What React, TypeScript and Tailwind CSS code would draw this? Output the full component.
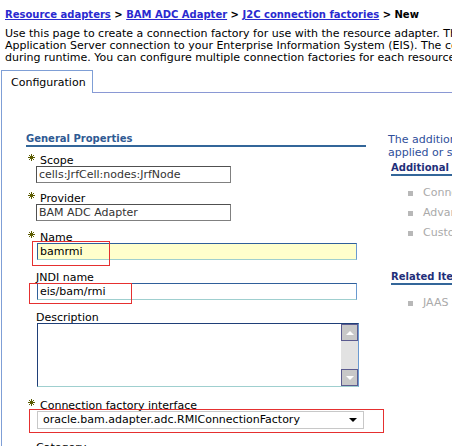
import React from "react";

const Star = () => (
  <svg width="7" height="7" viewBox="0 0 7 7" className="absolute left-[2px] top-[-1px]">
    <g stroke="#5a5a00" strokeWidth="1" strokeLinecap="round">
      <line x1="3.5" y1="0.4" x2="3.5" y2="6.6" />
      <line x1="0.4" y1="3.5" x2="6.6" y2="3.5" />
      <line x1="1.3" y1="1.3" x2="5.7" y2="5.7" />
      <line x1="5.7" y1="1.3" x2="1.3" y2="5.7" />
    </g>
  </svg>
);

const Label = ({ text, req, mt }: { text: string; req?: boolean; mt: string }) => (
  <div className={`relative h-[11px] leading-[11px] ${mt} ${req ? "pl-[14px]" : "pl-[10px]"} text-black whitespace-nowrap`}>
    {req && <Star />}
    {text}
  </div>
);

export default function App() {
  return (
    <div
      className="relative w-[452px] h-[446px] overflow-hidden bg-white text-[11px] text-black"
      style={{ fontFamily: '"DejaVu Sans", Verdana, sans-serif' }}
    >
      <div className="pl-[5px] pt-[9px] h-[21px] leading-[12px] text-[10px] font-bold whitespace-nowrap">
        <span className="text-[#2a2ad0] underline">Resource adapters</span>
        <span> &gt; </span>
        <span className="text-[#2a2ad0] underline">BAM ADC Adapter</span>
        <span> &gt; </span>
        <span className="text-[#2a2ad0] underline">J2C connection factories</span>
        <span> &gt; New</span>
      </div>
      <div className="pl-[5px] mt-[7px] leading-[12px] whitespace-nowrap">
        <div>Use this page to create a connection factory for use with the resource adapter. The connection factory provides the WebSphere</div>
        <div>Application Server connection to your Enterprise Information System (EIS). The connection factory is used</div>
        <div>during runtime. You can configure multiple connection factories for each resource adapter.</div>
      </div>
      <div className="mt-[6px] ml-[1px] flex w-[700px]">
        <div className="h-[23px] w-[92px] border-l border-t border-r border-[#7f9fd6] pl-[9px] pt-[6px] leading-[12px]">
          Configuration
        </div>
        <div className="flex-1 h-[23px] border-b border-[#8a98d4]" />
      </div>
      <div className="ml-[1px] border-l border-[#7f9fd6] pl-[24px] pt-[40px] flex w-[800px] h-[400px]">
        <div className="w-[340px] flex flex-col">
          <div className="h-[14px] leading-[12px] text-[10px] font-bold text-[#2f5a93] border-b-2 border-[#336699]">
            General Properties
          </div>
          <Label text="Scope" req mt="mt-[8px]" />
          <div className="ml-[10px] w-[195px] h-[17px] border border-[#808080] border-t-[#505050] border-l-[#505050] pl-[2px] leading-[15px] text-[#333] whitespace-nowrap overflow-hidden">
            cells:JrfCell:nodes:JrfNode
          </div>
          <Label text="Provider" req mt="mt-[10px]" />
          <div className="ml-[10px] w-[195px] h-[17px] border border-[#808080] border-t-[#505050] border-l-[#505050] pl-[2px] leading-[15px] text-[#333] whitespace-nowrap overflow-hidden">
            BAM ADC Adapter
          </div>
          <Label text="Name" req mt="mt-[11px]" />
          <div className="ml-[11px] w-[320px] h-[17px] bg-[#ffffcc] border border-[#6a9ad0] border-t-[#2f5f9a] border-l-[#2f5f9a] border-b-[#9fcfcf] pl-[2px] leading-[15px] whitespace-nowrap">
            bamrmi
          </div>
          <Label text="JNDI name" mt="mt-[12px]" />
          <div className="ml-[11px] w-[320px] h-[17px] bg-white border border-[#6a9ad0] border-t-[#2f5f9a] border-l-[#2f5f9a] border-b-[#9fcfcf] pl-[2px] leading-[15px] whitespace-nowrap">
            eis/bam/rmi
          </div>
          <Label text="Description" mt="mt-[12px]" />
          <div className="ml-[11px] w-[322px] h-[64px] bg-white border border-[#6a9ad0] border-t-[#1f3f78] border-l-[#1f3f78] border-b-[#9fcfcf] flex justify-end">
            <div className="w-[17px] h-full bg-[#e2e2e2] flex flex-col justify-between">
              <div className="w-[17px] h-[17px] bg-[#c8c8c8] border border-[#5b5b8f] flex items-center justify-center">
                <div className="w-0 h-0 border-l-[4px] border-r-[4px] border-b-[4px] border-l-transparent border-r-transparent border-b-white" />
              </div>
              <div className="w-[17px] h-[17px] bg-[#c8c8c8] border border-[#5b5b8f] flex items-center justify-center">
                <div className="w-0 h-0 border-l-[4px] border-r-[4px] border-t-[4px] border-l-transparent border-r-transparent border-t-white" />
              </div>
            </div>
          </div>
          <Label text="Connection factory interface" req mt="mt-[13px]" />
          <div className="ml-[11px] w-[327px] h-[18px] bg-white border border-[#c8c8c8] pl-[5px] pr-[5px] flex items-center justify-between whitespace-nowrap">
            <span className="leading-[16px]">oracle.bam.adapter.adc.RMIConnectionFactory</span>
            <div className="w-0 h-0 border-l-[4px] border-r-[4px] border-t-[4px] border-l-transparent border-r-transparent border-t-black mr-[1px]" />
          </div>
          <Label text="Category" mt="mt-[13px]" />
        </div>
        <div className="ml-[22px] w-[360px] flex flex-col">
          <div className="h-[26px] leading-[13px] text-[#2f4f9a] whitespace-nowrap">
            <div>The additional properties will not be available until the general properties for this item are</div>
            <div>applied or saved.</div>
          </div>
          <div className="ml-[3px] mt-[3px] h-[14px] leading-[12px] text-[10px] font-bold text-[#1f2f7a] border-b-2 border-[#336699] whitespace-nowrap">
            Additional Properties
          </div>
          <div className="ml-[20px] mt-[7px] flex flex-col text-[#aaaaaa]">
            {["Connection pool properties", "Advanced connection factory properties", "Custom properties"].map((t) => (
              <div key={t} className="h-[20px] leading-[20px] flex items-center whitespace-nowrap">
                <div className="w-[5px] h-[5px] bg-[#b8b8b8] mr-[10px]" />
                {t}
              </div>
            ))}
          </div>
          <div className="ml-[3px] mt-[28px] h-[14px] leading-[12px] text-[10px] font-bold text-[#1f2f7a] border-b-2 border-[#336699] whitespace-nowrap">
            Related Items
          </div>
          <div className="ml-[20px] mt-[8px] flex flex-col text-[#aaaaaa]">
            <div className="h-[20px] leading-[20px] flex items-center whitespace-nowrap">
              <div className="w-[5px] h-[5px] bg-[#b8b8b8] mr-[10px]" />
              JAAS - J2C authentication data
            </div>
          </div>
        </div>
      </div>

      <div className="absolute left-[32px] top-[241px] w-[78px] h-[25px] border border-[#e53030]" />
      <div className="absolute left-[29px] top-[283px] w-[103px] h-[21px] border border-[#e53030]" />
      <div className="absolute left-[29px] top-[409px] w-[355px] h-[24px] border border-[#e53030]" />
    </div>
  );
}
